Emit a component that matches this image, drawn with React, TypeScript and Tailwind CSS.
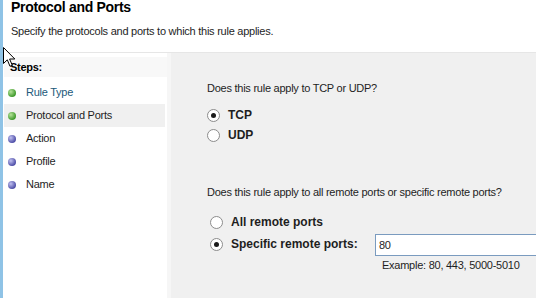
import React from "react";

const STEPS = [
  { label: "Rule Type", done: true, link: true },
  { label: "Protocol and Ports", done: true, current: true },
  { label: "Action", done: false },
  { label: "Profile", done: false },
  { label: "Name", done: false },
];

function Bullet({ done }: { done: boolean }) {
  return (
    <span
      className={
        "block h-[8px] w-[8px] rounded-full " +
        (done
          ? "bg-[radial-gradient(circle_at_35%_35%,#b6e39a,#3f9a2c_70%)]"
          : "bg-[radial-gradient(circle_at_35%_35%,#c0c0f0,#4f4fa8_70%)]")
      }
    />
  );
}

function Radio({ checked }: { checked?: boolean }) {
  return (
    <span className="flex h-[13px] w-[13px] shrink-0 items-center justify-center rounded-full border border-[#8c8c8c] bg-white">
      {checked && <span className="block h-[5px] w-[5px] rounded-full bg-[#1a1a1a]" />}
    </span>
  );
}

export default function App() {
  return (
    <div className="relative flex h-[298px] w-[536px] overflow-hidden bg-white font-['Liberation_Sans',Arial,sans-serif] text-[11px] tracking-[-0.25px] text-[#1e1e1e]">
      {/* window edge */}
      <div className="w-[3px] shrink-0 bg-[#8fc3e6]" />

      <div className="flex flex-1 flex-col">
        {/* Header */}
        <div className="h-[53px] shrink-0 border-b border-[#e6e6e6] pl-[8px]">
          <div className="mt-[-1px] text-[14px] font-bold leading-[17px] tracking-[-0.3px] text-black">Protocol and Ports</div>
          <div className="mt-[8px] pl-[-1px] leading-[14px]">
            Specify the protocols and ports to which this rule applies.
          </div>
        </div>

        <div className="flex flex-1">
          {/* Steps panel */}
          <div className="w-[168px] shrink-0 border-r-[4px] border-[#f6f6f6] bg-white pt-[4px]">
            <div className="ml-[1px] h-[20px] bg-[#f8f8f8] pl-[6px] font-bold leading-[20px] tracking-[-0.3px] text-black">
              Steps:
            </div>
            <div className="mt-[4px] flex flex-col">
              {STEPS.map((s) => (
                <div
                  key={s.label}
                  className={
                    "ml-[1px] mr-[2px] flex h-[23px] items-center gap-[10px] pl-[4px] " +
                    (s.current ? "bg-[#f0f0f0]" : "")
                  }
                >
                  <Bullet done={s.done} />
                  <span className={s.link ? "text-[#22597a]" : "text-[#1e1e1e]"}>{s.label}</span>
                </div>
              ))}
            </div>
          </div>

          {/* Content */}
          <div className="flex-1 bg-[#f0f0f0] pl-[36px] pt-[28px]">
            <div className="leading-[14px]">Does this rule apply to TCP or UDP?</div>
            <div className="mt-[13px] flex flex-col gap-[6px] text-[12px] tracking-normal">
              <label className="flex h-[14px] items-center gap-[8px] font-bold">
                <Radio checked />
                TCP
              </label>
              <label className="flex h-[14px] items-center gap-[8px] font-bold">
                <Radio />
                UDP
              </label>
            </div>

            <div className="mt-[43px] leading-[14px]">
              Does this rule apply to all remote ports or specific remote ports?
            </div>
            <div className="ml-[3px] mt-[16px] flex flex-col gap-[5px]">
              <label className="flex h-[14px] items-center gap-[8px] text-[12px] font-bold tracking-normal">
                <Radio />
                All remote ports
              </label>
              <div className="flex items-start">
                <label className="mt-[3px] flex h-[14px] w-[165px] shrink-0 items-center gap-[8px] text-[12px] font-bold tracking-normal">
                  <Radio checked />
                  Specific remote ports:
                </label>
                <div className="flex flex-1 flex-col">
                  <div className="h-[22px] border border-r-0 border-[#7a9bbf] bg-white pl-[3px] leading-[20px]">80</div>
                  <div className="mt-[2px] pl-[7px] leading-[14px]">Example: 80, 443, 5000-5010</div>
                </div>
              </div>
            </div>
          </div>
        </div>
      </div>

      {/* mouse pointer */}
      <svg className="absolute left-[3px] top-[47px]" width="13" height="21" viewBox="0 0 13 21">
        <path d="M0.5 0.5 L0.5 16.5 L4.3 12.8 L7 19.3 L9.3 18.3 L6.6 12 L11.8 12 Z" fill="white" stroke="black" strokeWidth="1" strokeLinejoin="miter" />
      </svg>
    </div>
  );
}
